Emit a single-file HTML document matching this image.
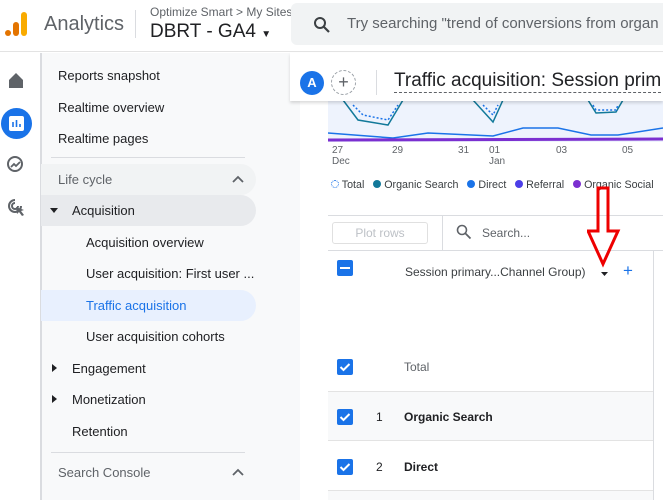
<!DOCTYPE html>
<html><head><style>
*{margin:0;padding:0;box-sizing:border-box}
body{width:663px;height:500px;overflow:hidden;background:#fff;font-family:"Liberation Sans",Arial,sans-serif;position:relative;color:#202124}
.abs{position:absolute}
.nav{left:41px;top:53px;width:259px;height:447px;background:#f8f9fa;border-left:1px solid #dadce0}
.ni{position:absolute;font-size:13px;color:#202124;white-space:nowrap}
.sec{color:#5f6368}
</style></head><body>
<div class="abs" style="left:0;top:0;width:663px;height:52px;border-bottom:1px solid #e3e3e3;background:#fff"></div>
<svg class="abs" style="left:4px;top:11px" width="24" height="26"><circle cx="4" cy="22" r="3" fill="#e37400"/><rect x="9" y="11" width="6" height="14" rx="3" fill="#e37400"/><rect x="17" y="1" width="6" height="24" rx="3" fill="#f9ab00"/></svg>
<div class="abs" style="left:44px;top:13px;font-size:20px;color:#5f6368">Analytics</div>
<div class="abs" style="left:135px;top:10px;width:1px;height:28px;background:#dadce0"></div>
<div class="abs" style="left:150px;top:5px;font-size:12px;color:#5f6368">Optimize Smart &gt; My Sites</div>
<div class="abs" style="left:150px;top:21px;font-size:19px;color:#202124">DBRT - GA4 <span style="font-size:10px">▼</span></div>
<div class="abs" style="left:291px;top:3px;width:380px;height:42px;background:#f1f3f4;border-radius:6px"></div>
<svg class="abs" style="left:313px;top:16px" width="18" height="18"><circle cx="7" cy="7" r="5" stroke="#3c4043" stroke-width="2" fill="none"/><path d="M11 11l5 5" stroke="#3c4043" stroke-width="2.2"/></svg>
<div class="abs" style="left:347px;top:15px;font-size:15px;color:#5f6368;white-space:nowrap">Try searching "trend of conversions from organ</div>
<div class="abs" style="left:40px;top:53px;width:1px;height:447px;background:#dadce0"></div>
<svg class="abs" style="left:8px;top:72px" width="18" height="16"><path d="M1 8L8 1l7 7v8H1z" fill="#5f6368"/></svg>
<div class="abs" style="left:1px;top:108px;width:31px;height:31px;border-radius:50%;background:#1a73e8"></div>
<div class="abs" style="left:9px;top:116px;width:15px;height:15px;background:#fff;border-radius:2px"></div>
<svg class="abs" style="left:9px;top:116px" width="15" height="15"><path d="M4 11V6M7.5 11V4M11 11V8" stroke="#1a73e8" stroke-width="1.6"/></svg>
<svg class="abs" style="left:6px;top:155px" width="20" height="20"><circle cx="9" cy="9" r="7" stroke="#5f6368" stroke-width="2" fill="none"/><path d="M5 12l3-3 2 2 4-4" stroke="#5f6368" stroke-width="1.8" fill="none"/></svg>
<svg class="abs" style="left:6px;top:197px" width="22" height="22"><path d="M9 3a6 6 0 1 0 6 6" stroke="#5f6368" stroke-width="2" fill="none"/><path d="M9 6a3 3 0 1 0 3 3" stroke="#5f6368" stroke-width="2" fill="none"/><path d="M10 10l8 3-3 1 3 4-2 1-3-4-2 2z" fill="#5f6368"/></svg>
<div class="abs nav"></div>
<div class="ni" style="left:58px;top:68px">Reports snapshot</div>
<div class="ni" style="left:58px;top:100px">Realtime overview</div>
<div class="ni" style="left:58px;top:131px">Realtime pages</div>
<div class="abs" style="left:51px;top:157px;width:194px;height:1px;background:#dadce0"></div>
<div class="abs" style="left:41px;top:164px;width:215px;height:31px;background:#f1f3f4;border-radius:0 16px 16px 0"></div>
<div class="ni sec" style="left:58px;top:172px">Life cycle</div>
<svg class="abs" style="left:232px;top:175px" width="12" height="8"><path d="M1 7l5-5 5 5" stroke="#5f6368" stroke-width="1.8" fill="none"/></svg>
<div class="abs" style="left:41px;top:195px;width:215px;height:31px;background:#e8eaed;border-radius:0 16px 16px 0"></div>
<svg class="abs" style="left:50px;top:208px" width="8" height="5"><path d="M0 0h8L4 5z" fill="#202124"/></svg>
<div class="ni" style="left:72px;top:203px">Acquisition</div>
<div class="ni" style="left:86px;top:235px">Acquisition overview</div>
<div class="ni" style="left:86px;top:266px">User acquisition: First user ...</div>
<div class="abs" style="left:41px;top:290px;width:215px;height:31px;background:#e8f0fe;border-radius:0 16px 16px 0"></div>
<div class="ni" style="left:86px;top:298px;color:#1a73e8">Traffic acquisition</div>
<div class="ni" style="left:86px;top:329px">User acquisition cohorts</div>
<svg class="abs" style="left:52px;top:364px" width="5" height="8"><path d="M0 0v8l5-4z" fill="#202124"/></svg>
<div class="ni" style="left:72px;top:361px">Engagement</div>
<svg class="abs" style="left:52px;top:395px" width="5" height="8"><path d="M0 0v8l5-4z" fill="#202124"/></svg>
<div class="ni" style="left:72px;top:392px">Monetization</div>
<div class="ni" style="left:72px;top:424px">Retention</div>
<div class="abs" style="left:51px;top:452px;width:194px;height:1px;background:#dadce0"></div>
<div class="ni sec" style="left:58px;top:465px">Search Console</div>
<svg class="abs" style="left:232px;top:468px" width="12" height="8"><path d="M1 7l5-5 5 5" stroke="#5f6368" stroke-width="1.8" fill="none"/></svg>
<div class="abs" style="left:300px;top:53px;width:363px;height:447px;background:#fff"></div>
<svg class="abs" style="left:328px;top:100px" width="335" height="45">
<rect x="0" y="0" width="335" height="42" fill="#eef3fd"/>
<path d="M15 0 L30 20 L60 25 L75 0" stroke="#12799a" stroke-width="1.5" fill="none"/>
<path d="M25 5 L35 15 L60 20 L70 5" stroke="#1a73e8" stroke-width="1.5" stroke-dasharray="2 2" fill="none"/>
<path d="M145 0 L165 22 L175 0" stroke="#12799a" stroke-width="1.5" fill="none"/>
<path d="M155 5 L165 15 L170 5" stroke="#1a73e8" stroke-width="1.5" stroke-dasharray="2 2" fill="none"/>
<path d="M260 0 L268 13 L288 12 L295 0" stroke="#12799a" stroke-width="1.5" fill="none"/>
<path d="M265 5 L268 10 L288 10 L290 5" stroke="#1a73e8" stroke-width="1.5" stroke-dasharray="2 2" fill="none"/>
<path d="M0 33 L65 38 L100 33 L165 36 L195 28 L230 28 L263 35 L290 35 L335 28" stroke="#1a73e8" stroke-width="1.5" fill="none"/>
<path d="M0 40 L335 39" stroke="#7b2fd0" stroke-width="3" fill="none"/>
</svg>
<div class="abs" style="left:332px;top:145px;font-size:10px;color:#5f6368;line-height:11px">27<br>Dec</div>
<div class="abs" style="left:392px;top:145px;font-size:10px;color:#5f6368">29</div>
<div class="abs" style="left:458px;top:145px;font-size:10px;color:#5f6368">31</div>
<div class="abs" style="left:489px;top:145px;font-size:10px;color:#5f6368;line-height:11px">01<br>Jan</div>
<div class="abs" style="left:556px;top:145px;font-size:10px;color:#5f6368">03</div>
<div class="abs" style="left:622px;top:145px;font-size:10px;color:#5f6368">05</div>
<div class="abs" style="left:331px;top:179px;font-size:10.7px;color:#3c4043;white-space:nowrap">
<span style="display:inline-block;width:8px;height:8px;border:1.5px dotted #1a73e8;border-radius:50%"></span> Total&nbsp;&nbsp;
<span style="display:inline-block;width:8px;height:8px;background:#12799a;border-radius:50%"></span> Organic Search&nbsp;&nbsp;
<span style="display:inline-block;width:8px;height:8px;background:#1a73e8;border-radius:50%"></span> Direct&nbsp;&nbsp;
<span style="display:inline-block;width:8px;height:8px;background:#4c3ee8;border-radius:50%"></span> Referral&nbsp;&nbsp;
<span style="display:inline-block;width:8px;height:8px;background:#7b2fd0;border-radius:50%"></span> Organic Social</div>
<div class="abs" style="left:328px;top:215px;width:335px;height:1px;background:#dadce0"></div>
<div class="abs" style="left:332px;top:222px;width:96px;height:22px;border:1px solid #e0e0e0;border-radius:3px;font-size:12px;color:#bdc1c6;text-align:center;line-height:20px">Plot rows</div>
<div class="abs" style="left:442px;top:216px;width:1px;height:34px;background:#dadce0"></div>
<svg class="abs" style="left:456px;top:224px" width="16" height="16"><circle cx="6" cy="6" r="4.5" stroke="#5f6368" stroke-width="1.6" fill="none"/><path d="M9.5 9.5l5 5" stroke="#5f6368" stroke-width="1.8"/></svg>
<div class="abs" style="left:482px;top:226px;font-size:12px;color:#5f6368">Search...</div>
<div class="abs" style="left:328px;top:250px;width:335px;height:1px;background:#dadce0"></div>
<div class="abs" style="left:653px;top:250px;width:1px;height:250px;background:#dadce0"></div>
<div class="abs" style="left:337px;top:260px;width:16px;height:16px;background:#1a73e8;border-radius:2px"></div>
<div class="abs" style="left:340px;top:267px;width:10px;height:2px;background:#fff"></div>
<div class="abs" style="left:405px;top:265px;font-size:12px;color:#3c4043;white-space:nowrap">Session primary...Channel Group)</div>
<svg class="abs" style="left:601px;top:272px" width="7" height="4"><path d="M0 0h7L3.5 4z" fill="#202124"/></svg>
<div class="abs" style="left:623px;top:261px;font-size:17px;color:#1a73e8">+</div>
<svg class="abs" style="left:337px;top:359px" width="16" height="16"><rect width="16" height="16" rx="2" fill="#1a73e8"/><path d="M3.5 8l3 3 6-6" stroke="#fff" stroke-width="2" fill="none"/></svg>
<div class="abs" style="left:404px;top:360px;font-size:12px;color:#5f6368">Total</div>
<div class="abs" style="left:328px;top:391px;width:325px;height:50px;background:#f8f9fa;border-top:1px solid #e3e3e3;border-bottom:1px solid #e3e3e3"></div>
<svg class="abs" style="left:337px;top:409px" width="16" height="16"><rect width="16" height="16" rx="2" fill="#1a73e8"/><path d="M3.5 8l3 3 6-6" stroke="#fff" stroke-width="2" fill="none"/></svg>
<div class="abs" style="left:376px;top:410px;font-size:12px">1</div>
<div class="abs" style="left:404px;top:410px;font-size:12px;font-weight:bold">Organic Search</div>
<svg class="abs" style="left:337px;top:459px" width="16" height="16"><rect width="16" height="16" rx="2" fill="#1a73e8"/><path d="M3.5 8l3 3 6-6" stroke="#fff" stroke-width="2" fill="none"/></svg>
<div class="abs" style="left:376px;top:460px;font-size:12px">2</div>
<div class="abs" style="left:404px;top:460px;font-size:12px;font-weight:bold">Direct</div>
<div class="abs" style="left:328px;top:490px;width:325px;height:10px;background:#f8f9fa;border-top:1px solid #e3e3e3"></div>
<div class="abs" style="left:290px;top:53px;width:373px;height:48px;background:#fff;box-shadow:0 2px 3px rgba(0,0,0,.15)"></div>
<div class="abs" style="left:300px;top:71px;width:24px;height:24px;border-radius:50%;background:#1a73e8;color:#fff;font-size:13px;font-weight:bold;text-align:center;line-height:24px">A</div>
<div class="abs" style="left:331px;top:70px;width:25px;height:25px;border-radius:50%;border:1px dashed #9aa0a6;color:#5f6368;font-size:18px;text-align:center;line-height:22px">+</div>
<div class="abs" style="left:376px;top:70px;width:1px;height:25px;background:#dadce0"></div>
<div class="abs" style="left:394px;top:70px;font-size:19px;color:#202124;white-space:nowrap;border-bottom:1px dashed #5f6368;line-height:22px">Traffic acquisition: Session prim</div>
<svg class="abs" style="left:587px;top:186px" width="36" height="82"><path d="M11 2h10v43h10L16 78 1 45h10z" fill="none" stroke="#e00" stroke-width="3"/></svg>
</body></html>
